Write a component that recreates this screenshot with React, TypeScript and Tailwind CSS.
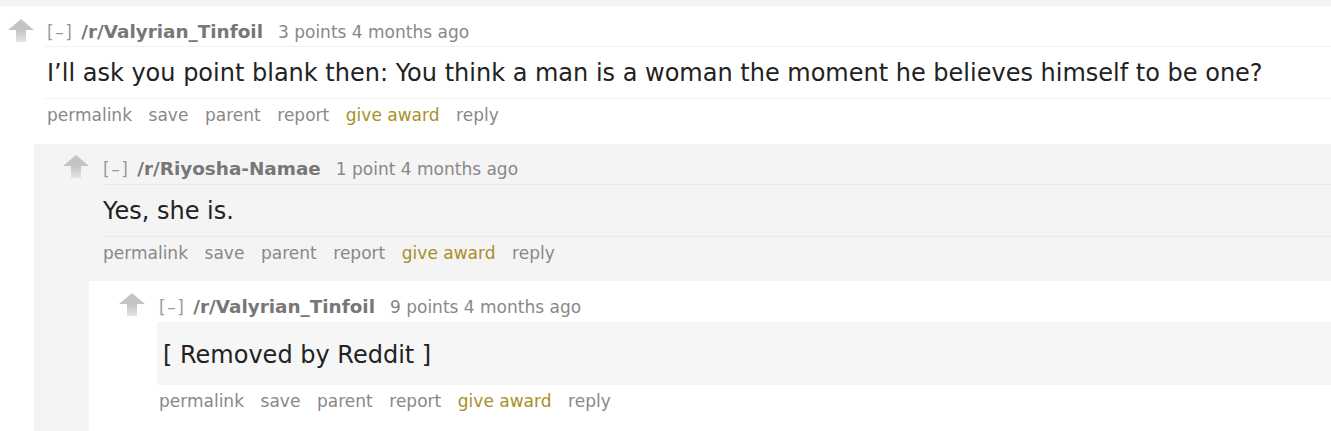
import React from "react";

const font = { fontFamily: '"DejaVu Sans", Verdana, sans-serif' };

function Arrow() {
  return (
    <svg width="26" height="23" viewBox="0 0 26 23" className="block">
      <defs>
        <linearGradient id="stem" x1="0" y1="0" x2="0" y2="1">
          <stop offset="0" stopColor="#c4c4c4" />
          <stop offset="1" stopColor="#e4e4e4" />
        </linearGradient>
      </defs>
      <polygon points="13,0 26,11 0,11" fill="#c4c4c4" />
      <rect x="8" y="11" width="10" height="12" fill="url(#stem)" />
    </svg>
  );
}

function Meta({ user, points }: { user: string; points: string }) {
  return (
    <div className="text-[17px] whitespace-nowrap flex items-baseline">
      <span className="text-[#999] tracking-[1.5px] mr-[8px]">[–]</span>
      <span className="font-bold text-[#777] text-[18.4px] mr-[15px]">{user}</span>
      <span className="text-[#888]">{points} 4 months ago</span>
    </div>
  );
}

function Actions() {
  return (
    <div className="h-[32px] leading-[32px] px-[2px] text-[17px] text-[#888] flex gap-[16.6px] whitespace-nowrap">
      <span>permalink</span>
      <span>save</span>
      <span>parent</span>
      <span>report</span>
      <span className="text-[#a88f2a]">give award</span>
      <span>reply</span>
    </div>
  );
}

export default function App() {
  return (
    <div style={font} className="w-[1331px] h-[431px] overflow-hidden bg-white">
      <div className="h-[6px] bg-[#f4f4f4]" />
      {/* comment 1 */}
      <div className="flex pl-[8px]">
        <div className="w-[26px] mt-[13px] mr-[11px] shrink-0">
          <Arrow />
        </div>
        <div className="flex-1 min-w-0">
          <div className="h-[41px] pt-[13px] leading-[26px] px-[2px] border-b border-[#f1f1f1]">
            <Meta user="/r/Valyrian_Tinfoil" points="3 points" />
          </div>
          <div className="h-[52px] leading-[53px] px-[2px] border-b border-[#f1f1f1] text-[24px] text-[#222] whitespace-nowrap">
            I’ll ask you point blank then: You think a man is a woman the moment he believes himself to be one?
          </div>
          <Actions />
        </div>
      </div>
      {/* comment 2 */}
      <div className="ml-[34px] mt-[13px] bg-[#f4f4f4]">
        <div className="flex pl-[29px]">
          <div className="w-[26px] mt-[11px] mr-[12px] shrink-0">
            <Arrow />
          </div>
          <div className="flex-1 min-w-0">
            <div className="h-[41px] pt-[12px] leading-[26px] px-[2px] border-b border-[#eaeaea]">
              <Meta user="/r/Riyosha-Namae" points="1 point" />
            </div>
            <div className="h-[52px] leading-[53px] px-[2px] border-b border-[#eaeaea] text-[24px] text-[#222] whitespace-nowrap">
              Yes, she is.
            </div>
            <Actions />
          </div>
        </div>
        {/* comment 3 */}
        <div className="ml-[55px] mt-[12px] bg-white h-[200px]">
          <div className="flex pl-[30px]">
            <div className="w-[26px] mt-[12px] mr-[12px] shrink-0">
              <Arrow />
            </div>
            <div className="flex-1 min-w-0">
              <div className="h-[41px] pt-[13px] leading-[26px] px-[2px]">
                <Meta user="/r/Valyrian_Tinfoil" points="9 points" />
              </div>
              <div className="h-[63px] leading-[66px] px-[6px] bg-[#f6f6f6] text-[24px] text-[#222] whitespace-nowrap">
                [ Removed by Reddit ]
              </div>
              <Actions />
            </div>
          </div>
        </div>
      </div>
    </div>
  );
}
